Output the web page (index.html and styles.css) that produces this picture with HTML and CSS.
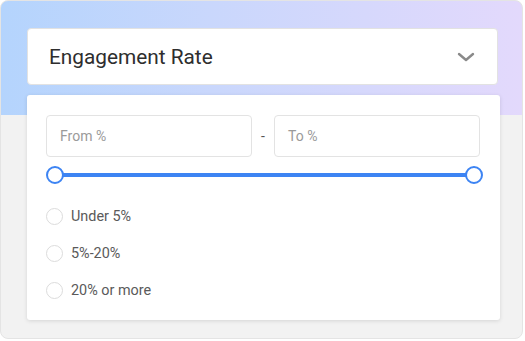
FILE: index.html
```html
<!DOCTYPE html>
<html lang="en">

<head>
    <meta charset="UTF-8">
    <meta name="viewport" content="width=device-width, initial-scale=1.0">
    <title>Engagement Rate Filter</title>
    <link rel="stylesheet" href="styles.css">
</head>

<body>
    <div class="frame">
        <div class="select">
            <span class="select-label">Engagement Rate</span>
            <svg class="chevron" width="18" height="10" viewBox="0 0 18 10">
                <path d="M2 2 L9 8 L16 2" fill="none" stroke="#8a8a8a" stroke-width="2.4" stroke-linecap="round" stroke-linejoin="round" />
            </svg>
        </div>
        <div class="panel">
            <div class="range-inputs">
                <div class="field">From %</div>
                <span class="dash">-</span>
                <div class="field">To %</div>
            </div>
            <div class="slider">
                <span class="thumb"></span>
                <span class="track"></span>
                <span class="thumb"></span>
            </div>
            <ul class="options">
                <li><span class="radio"></span>Under 5%</li>
                <li><span class="radio"></span>5%-20%</li>
                <li><span class="radio"></span>20% or more</li>
            </ul>
        </div>
    </div>
</body>

</html>
```

FILE: styles.css
```css
body {
    margin: 0;
    font-family: Roboto, "Liberation Sans", sans-serif;
    background: #fff;
}

.frame {
    width: 523px;
    height: 339px;
    box-sizing: border-box;
    border: 1px solid #e4e4e4;
    border-radius: 8px;
    padding: 27px 0 0 26px;
    background: linear-gradient(90deg, #b4d4fd 0%, #c9d7fc 40%, #e3d9fc 100%) no-repeat top / 100% 114px, #f2f2f2;
}

.select {
    width: 471px;
    height: 57px;
    box-sizing: border-box;
    display: flex;
    align-items: center;
    justify-content: space-between;
    padding: 0 22px 0 21px;
    background: #fff;
    border: 1px solid #e2e2e2;
    border-radius: 4px;
}

.select-label {
    font-size: 20.8px;
    color: #2e2e2e;
}

.panel {
    width: 473px;
    margin-top: 10px;
    box-sizing: border-box;
    padding: 20px 19px 21px 19px;
    background: #fff;
    border-radius: 3px;
    box-shadow: 0 1px 4px rgba(0, 0, 0, 0.12);
}

.range-inputs {
    display: flex;
    align-items: center;
    gap: 7px;
}

.field {
    width: 206px;
    height: 42px;
    box-sizing: border-box;
    padding-left: 13px;
    display: flex;
    align-items: center;
    border: 1px solid #e3e3e3;
    border-radius: 4px;
    font-size: 14px;
    color: #9a9a9a;
}

.dash {
    width: 8px;
    text-align: center;
    font-size: 14px;
    color: #555;
}

.slider {
    display: flex;
    align-items: center;
    margin-top: 9px;
    width: 437px;
}

.thumb {
    width: 14px;
    height: 14px;
    border: 2px solid #3d84f3;
    border-radius: 50%;
    background: #fff;
    position: relative;
    z-index: 1;
}

.track {
    flex: 1;
    height: 4px;
    margin: 0 -2px;
    background: #3d84f3;
}

.options {
    list-style: none;
    margin: 24px 0 0 0;
    padding: 0;
    display: flex;
    flex-direction: column;
    gap: 20px;
}

.options li {
    display: flex;
    align-items: center;
    gap: 8px;
    height: 17px;
    font-size: 14.4px;
    color: #5a5a5a;
}

.radio {
    width: 17px;
    height: 17px;
    box-sizing: border-box;
    border: 1px solid #dcdcdc;
    border-radius: 50%;
}
```
